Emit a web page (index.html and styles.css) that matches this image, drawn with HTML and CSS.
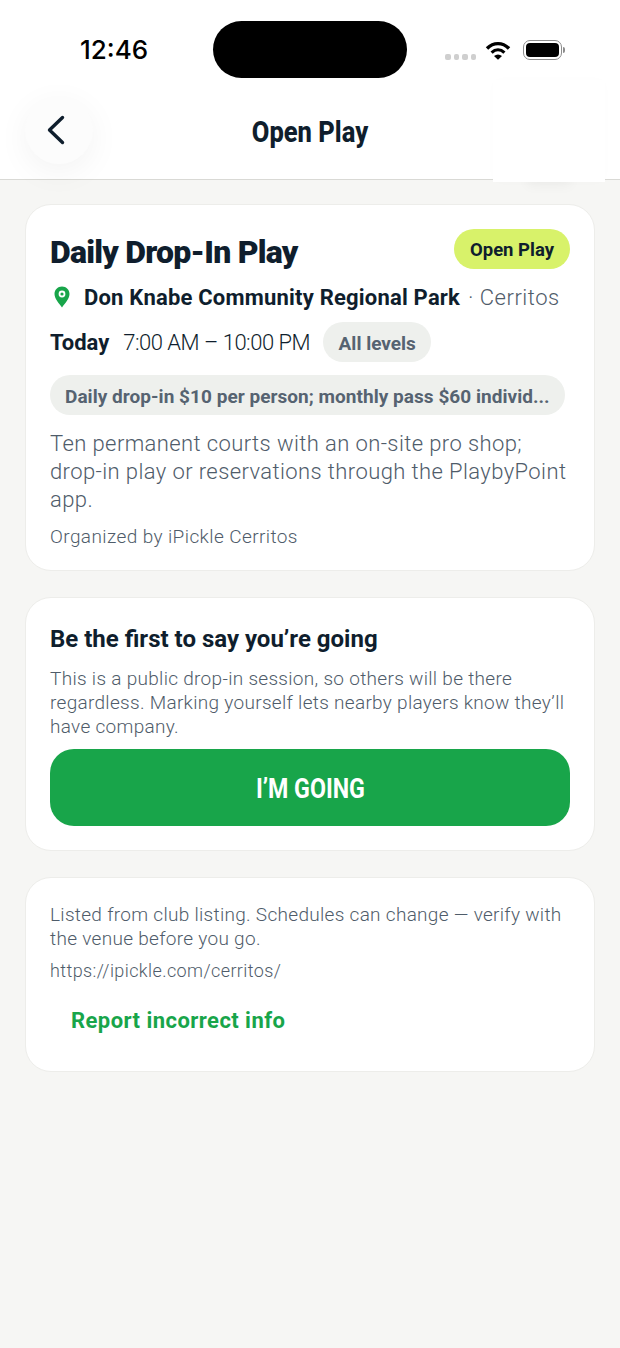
FILE: index.html
```html
<!DOCTYPE html>
<html lang="en">
<head>
    <meta charset="UTF-8">
    <meta name="viewport" content="width=device-width, initial-scale=1.0">
    <title>Open Play</title>
    <link rel="stylesheet" href="styles.css">
</head>
<body>
    <header class="top">
        <div class="status">
            <span class="time">12:46</span>
            <div class="island"></div>
            <div class="status-icons">
                <div class="signal"><i></i><i></i><i></i><i></i></div>
                <svg class="wifi" width="26" height="19" viewBox="0 0 26 19">
                    <path d="M2 7.5C8.5 1 17.5 1 24 7.5" fill="none" stroke="#000" stroke-width="3.4"/>
                    <path d="M6.6 11.6C10.5 8 15.5 8 19.4 11.6" fill="none" stroke="#000" stroke-width="3.2"/>
                    <path d="M9 15L13 18.8L17 15C14.5 13 11.5 13 9 15Z" fill="#000"/>
                </svg>
                <div class="battery"><div class="battery-fill"></div></div>
                <div class="battery-cap"></div>
            </div>
        </div>
        <div class="nav">
            <button class="back">
                <svg width="18" height="30" viewBox="0 0 18 30">
                    <path d="M15.5 2.5L2.5 15L15.5 27.5" fill="none" stroke="#0f1e2d" stroke-width="3.4" stroke-linecap="round" stroke-linejoin="round"/>
                </svg>
            </button>
            <h1>Open Play</h1>
        </div>
        <div class="blank"></div>
    </header>

    <main class="content">
        <section class="card main-card">
            <div class="title-row">
                <h2>Daily Drop-In Play</h2>
                <span class="tag">Open Play</span>
            </div>
            <div class="venue-row">
                <svg class="pin" width="16" height="22" viewBox="0 0 16 22">
                    <path d="M8 0.5C3.7 0.5 0.5 3.8 0.5 8C0.5 13 5.5 18 8 21.5C10.5 18 15.5 13 15.5 8C15.5 3.8 12.3 0.5 8 0.5Z" fill="#18a54a"/>
                    <circle cx="8" cy="8" r="3.4" fill="#fff"/>
                    <circle cx="8" cy="8" r="1.6" fill="#18a54a"/>
                </svg>
                <span class="venue">Don Knabe Community Regional Park</span>
                <span class="city">· Cerritos</span>
            </div>
            <div class="time-row">
                <span class="day">Today</span>
                <span class="hours">7:00 AM – 10:00 PM</span>
                <span class="level">All levels</span>
            </div>
            <div class="price">Daily drop-in $10 per person; monthly pass $60 individ...</div>
            <p class="desc">Ten permanent courts with an on-site pro shop; drop-in play or reservations through the PlaybyPoint app.</p>
            <p class="organizer">Organized by iPickle Cerritos</p>
        </section>

        <section class="card going-card">
            <h3>Be the first to say you’re going</h3>
            <p class="note">This is a public drop-in session, so others will be there regardless. Marking yourself lets nearby players know they’ll have company.</p>
            <button class="going"><span>I’M GOING</span></button>
        </section>

        <section class="card source-card">
            <p class="note">Listed from club listing. Schedules can change — verify with the venue before you go.</p>
            <p class="link">https://ipickle.com/cerritos/</p>
            <a class="report" href="#">Report incorrect info</a>
        </section>
    </main>
</body>
</html>
```

FILE: styles.css
```css
* {
    box-sizing: border-box;
}
body {
    margin: 0;
    height: 1348px;
    overflow: hidden;
    font-family: Roboto, Arial, sans-serif;
    background-color: #f6f6f4;
    color: #0f1e2d;
}
h1, h2, h3, p {
    margin: 0;
}
.top {
    position: relative;
    height: 180px;
    background-color: #ffffff;
    border-bottom: 1px solid #d9d9d5;
}
.status {
    height: 86px;
    padding: 21px 54px 0 80px;
    display: flex;
    align-items: flex-start;
}
.time {
    width: 133px;
    margin-top: 14px;
    font-family: Inter, sans-serif;
    font-size: 26px;
    line-height: 30px;
    font-weight: 500;
    color: #000;
}
.island {
    width: 194px;
    height: 57px;
    border-radius: 29px;
    background-color: #000;
}
.status-icons {
    margin-left: 38px;
    margin-top: 19px;
    display: flex;
    align-items: center;
}
.signal {
    display: flex;
    gap: 3px;
    margin-top: 13px;
    margin-right: 9px;
}
.signal i {
    width: 5.5px;
    height: 6px;
    border-radius: 2px;
    background-color: #cfcfcf;
}
.wifi {
    margin-right: 12px;
}
.battery {
    width: 39px;
    height: 20px;
    padding: 2px;
    border: 1.5px solid #8c8c8c;
    border-radius: 7px;
}
.battery-fill {
    height: 100%;
    border-radius: 4px;
    background-color: #000;
}
.battery-cap {
    width: 2px;
    height: 6px;
    margin-left: 1px;
    border-radius: 0 2px 2px 0;
    background-color: #8c8c8c;
}
.nav {
    height: 93px;
    padding: 10px 25px 0;
    display: flex;
    align-items: flex-start;
}
.back {
    width: 68px;
    height: 68px;
    padding: 0 6px 0 0;
    display: flex;
    align-items: center;
    justify-content: center;
    border: none;
    border-radius: 50%;
    background-color: #fcfcfc;
    box-shadow: 0 8px 32px rgba(0, 0, 0, 0.05);
}
.nav h1 {
    width: 434px;
    text-align: center;
    margin-top: 18px;
    font-size: 29px;
    line-height: 36px;
    font-weight: 800;
    transform: scaleX(0.88);
}
.blank {
    position: absolute;
    left: 493px;
    top: 80px;
    width: 112px;
    height: 102px;
    background-color: #ffffff;
    box-shadow: 0 38px 12px -34px rgba(0, 0, 0, 0.04), 0 0 12px rgba(0, 0, 0, 0.012);
}
.content {
    padding: 24px 25px 0;
    display: flex;
    flex-direction: column;
    gap: 26px;
}
.card {
    background-color: #ffffff;
    border: 1px solid #ededea;
    border-radius: 26px;
    padding: 24px;
}
.title-row {
    display: flex;
    justify-content: space-between;
    align-items: flex-start;
}
h2 {
    font-size: 32px;
    line-height: 46px;
    font-weight: 900;
    letter-spacing: -0.75px;
}
.tag {
    height: 40px;
    padding: 0 16px;
    border-radius: 20px;
    background-color: #d8f26a;
    font-size: 18.5px;
    line-height: 42px;
    font-weight: 700;
}
.venue-row {
    margin-top: 5px;
    height: 34px;
    display: flex;
    align-items: center;
}
.pin {
    margin-left: 4px;
    margin-right: 14px;
}
.venue {
    font-size: 22px;
    font-weight: 700;
    letter-spacing: 0.2px;
}
.city {
    margin-left: 8px;
    font-size: 22px;
    font-weight: 300;
    letter-spacing: 0.5px;
    color: #4f5c6a;
}
.time-row {
    margin-top: 8px;
    display: flex;
    align-items: center;
}
.day {
    font-size: 22px;
    font-weight: 700;
}
.hours {
    margin-left: 14px;
    font-size: 22px;
    font-weight: 300;
    letter-spacing: -0.5px;
}
.level {
    margin-left: 13px;
    height: 40px;
    padding: 0 15.5px;
    border-radius: 20px;
    background-color: #eef0ed;
    font-size: 19px;
    line-height: 43px;
    font-weight: 700;
    color: #566371;
}
.price {
    width: fit-content;
    margin-top: 13px;
    height: 40px;
    padding: 0 15px;
    border-radius: 20px;
    background-color: #eef0ed;
    font-size: 19px;
    line-height: 43px;
    font-weight: 700;
    letter-spacing: 0.04px;
    color: #566371;
    white-space: nowrap;
}
.desc {
    margin-top: 15px;
    font-size: 22px;
    line-height: 28px;
    font-weight: 300;
    letter-spacing: 0.4px;
    color: #4f5c6a;
}
.organizer {
    margin-top: 10px;
    font-size: 19px;
    line-height: 26px;
    font-weight: 300;
    letter-spacing: 0.4px;
    color: #4f5c6a;
}
.main-card {
    padding-bottom: 20px;
}
h3 {
    margin-top: 2px;
    font-size: 24px;
    line-height: 30px;
    font-weight: 700;
}
.note {
    font-size: 19px;
    line-height: 24px;
    font-weight: 300;
    letter-spacing: 0.3px;
    color: #4f5c6a;
}
.going-card .note {
    margin-top: 13px;
}
.going {
    display: block;
    width: 100%;
    height: 77px;
    margin-top: 10px;
    padding-top: 4px;
    border: none;
    border-radius: 24px;
    background-color: #18a54a;
    color: #ffffff;
    font-family: Roboto, Arial, sans-serif;
    font-size: 27px;
    font-weight: 700;
}
.going span {
    display: inline-block;
    transform: scaleX(0.86);
}
.source-card .note {
    margin-top: 1px;
}
.link {
    margin-top: 8px;
    font-size: 18px;
    line-height: 24px;
    font-weight: 300;
    letter-spacing: 0.4px;
    color: #4f5c6a;
}
.report {
    display: block;
    margin-top: 21px;
    margin-bottom: 9px;
    padding-left: 21px;
    font-size: 22px;
    line-height: 34px;
    font-weight: 700;
    color: #18a54a;
    text-decoration: none;
    letter-spacing: 0.45px;
}
```
